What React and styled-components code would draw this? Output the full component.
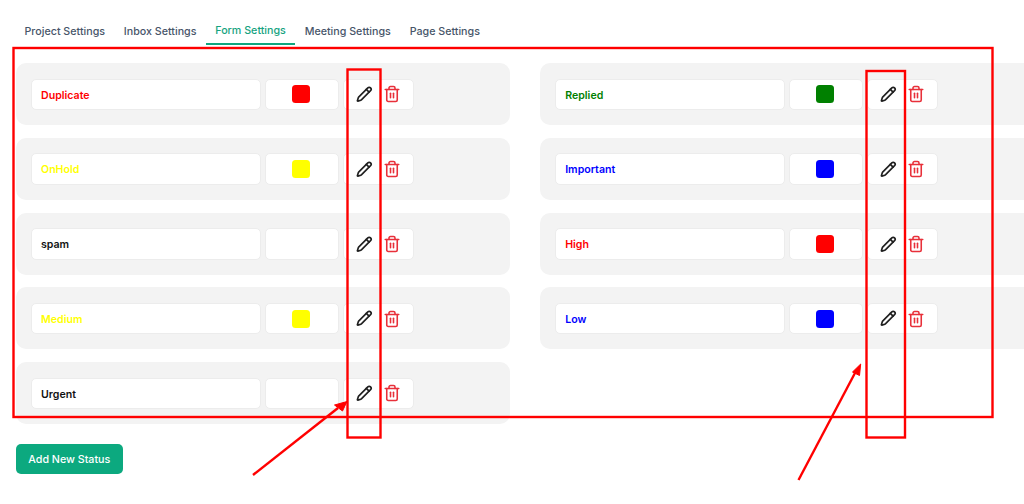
import React from 'react';
import styled, { createGlobalStyle } from 'styled-components';
import { Pencil, Trash2 } from 'lucide-react';

const GlobalStyle = createGlobalStyle`
  html, body {
    margin: 0;
    padding: 0;
    background: #fff;
    overflow: hidden;
  }
  body {
    font-family: Inter, "Liberation Sans", sans-serif;
  }
`;

const Page = styled.div`
  position: relative;
  width: 1024px;
  height: 504px;
  overflow: hidden;
  padding: 18px 0 0 16px;
  box-sizing: border-box;
`;

const Tabs = styled.div`
  display: flex;
  height: 27px;
`;

const Tab = styled.div`
  box-sizing: border-box;
  height: 27px;
  padding: 0 ${props => (props.$first ? '9.4px 0 8.5px' : '9.4px')};
  font-size: 10.7px;
  line-height: ${props => (props.$active ? '26px' : '27px')};
  font-weight: 500;
  white-space: nowrap;
  color: ${props => (props.$active ? '#16a37f' : '#475569')};
  border-bottom: 2px solid ${props => (props.$active ? '#0ea67f' : 'transparent')};
`;

const Columns = styled.div`
  display: grid;
  grid-template-columns: 494px 494px;
  column-gap: 30.2px;
  margin-top: 18px;
  width: 1019px;
  align-items: start;
`;

const Column = styled.div`
  display: flex;
  flex-direction: column;
  gap: 12.8px;
`;

const Card = styled.div`
  box-sizing: border-box;
  height: 62px;
  padding: 15.5px 15px;
  background: #f3f3f3;
  border-radius: 10px;
  display: flex;
  gap: 4px;
`;

const NameField = styled.div`
  box-sizing: border-box;
  width: 230px;
  height: 31.5px;
  padding: 0 9px;
  background: #fff;
  border: 1px solid #ececec;
  border-radius: 5px;
  font-size: 10.6px;
  font-weight: 600;
  line-height: 31px;
  color: ${props => props.$color};
`;

const ColorField = styled.div`
  box-sizing: border-box;
  width: 73.5px;
  height: 31.5px;
  padding-right: 1.5px;
  background: #fff;
  border: 1px solid #ececec;
  border-radius: 5px;
  display: flex;
  align-items: center;
  justify-content: center;
`;

const Swatch = styled.div`
  width: 18px;
  height: 18px;
  border-radius: 3.5px;
  background: ${props => props.$color};
`;

const Actions = styled.div`
  box-sizing: border-box;
  width: 71.5px;
  height: 31.5px;
  padding-left: 12.5px;
  background: #fff;
  border: 1px solid #ececec;
  border-radius: 5px;
  display: flex;
  align-items: center;
  gap: 10.5px;
`;

const AddButton = styled.button`
  display: block;
  width: 106.5px;
  height: 30.5px;
  margin-top: 19.8px;
  padding: 0;
  background: #0ca97f;
  border: 0;
  border-radius: 5px;
  color: #fff;
  font-family: inherit;
  font-size: 10.7px;
  font-weight: 500;
`;

const Annotations = styled.svg`
  position: absolute;
  left: 0;
  top: 0;
`;

const leftStatuses = [
  { name: 'Duplicate', color: '#ff0000', swatch: '#ff0000' },
  { name: 'OnHold', color: '#ffff00', swatch: '#ffff00' },
  { name: 'spam', color: '#111111' },
  { name: 'Medium', color: '#ffff00', swatch: '#ffff00' },
  { name: 'Urgent', color: '#111111' },
];

const rightStatuses = [
  { name: 'Replied', color: '#008000', swatch: '#008000' },
  { name: 'Important', color: '#0000ff', swatch: '#0000ff' },
  { name: 'High', color: '#ff0000', swatch: '#ff0000' },
  { name: 'Low', color: '#0000ff', swatch: '#0000ff' },
];

const tabs = ['Project Settings', 'Inbox Settings', 'Form Settings', 'Meeting Settings', 'Page Settings'];

const StatusCard = ({ status }) => (
  <Card>
    <NameField $color={status.color}>{status.name}</NameField>
    <ColorField>{status.swatch && <Swatch $color={status.swatch} />}</ColorField>
    <Actions>
      <Pencil size={16.5} color="#1f1f1f" strokeWidth={2.4} />
      <Trash2 size={18} color="#e8303a" strokeWidth={2.1} />
    </Actions>
  </Card>
);

const App = () => (
  <Page>
    <GlobalStyle />
    <Tabs>
      {tabs.map((tab, i) => (
        <Tab key={tab} $first={i === 0} $active={tab === 'Form Settings'}>
          {tab}
        </Tab>
      ))}
    </Tabs>
    <Columns>
      <Column>
        {leftStatuses.map(status => (
          <StatusCard key={status.name} status={status} />
        ))}
      </Column>
      <Column>
        {rightStatuses.map(status => (
          <StatusCard key={status.name} status={status} />
        ))}
      </Column>
    </Columns>
    <AddButton>Add New Status</AddButton>
    <Annotations width="1024" height="504" viewBox="0 0 1024 504" fill="none" stroke="#ff0000" strokeWidth="2.4">
      <rect x="13.5" y="48" width="979" height="369" />
      <rect x="347.5" y="69.5" width="33" height="368" />
      <rect x="866.5" y="71" width="38.5" height="366.5" />
      <path d="M253 475 L338 408" />
      <path d="M347 401.5 L334.5 405 L342.5 411 Z" fill="#ff0000" strokeWidth="1" />
      <path d="M798.5 480 L855 373" />
      <path d="M860.7 364 L852.5 372 L859.5 375.5 Z" fill="#ff0000" strokeWidth="1" />
    </Annotations>
  </Page>
);

export default App;
